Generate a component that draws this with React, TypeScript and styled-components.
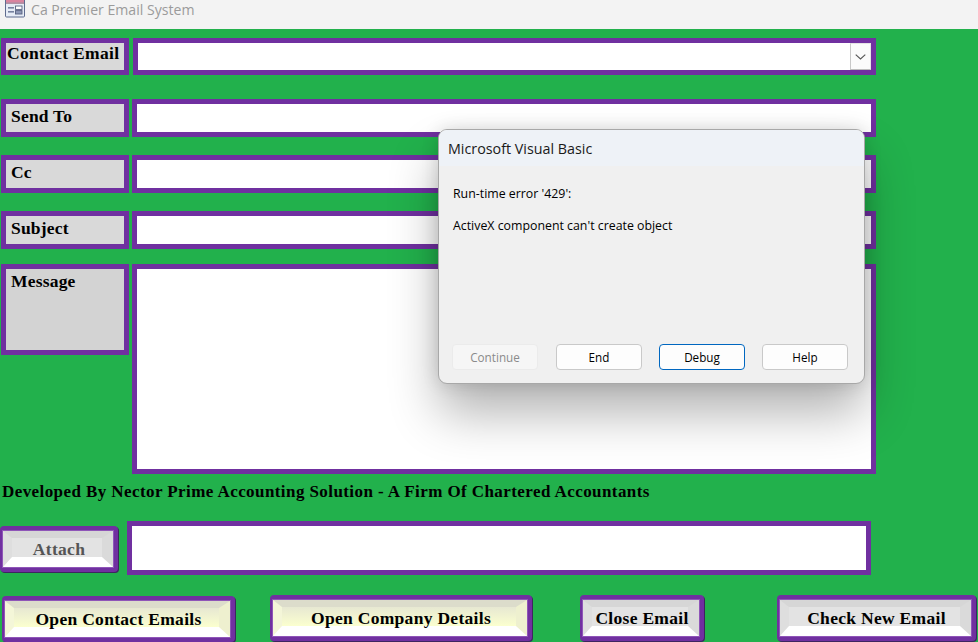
import React from "react";
import styled, { createGlobalStyle } from "styled-components";

const PURPLE = "#7030a0";
const GREEN = "#22b14c";
const SERIF = `"Liberation Serif", "Times New Roman", serif`;
const UI = `"Open Sans", "Noto Sans", sans-serif`;

const Global = createGlobalStyle`
  html, body { margin: 0; padding: 0; height: 642px; overflow: hidden; background: ${GREEN}; }
`;

const Page = styled.div`
  position: relative;
  width: 978px;
  height: 642px;
  overflow: hidden;
  background: ${GREEN};
`;

const TitleBar = styled.header`
  height: 29px;
  background: #f3f3f3;
  display: flex;
  align-items: flex-start;
  gap: 6px;
  padding-left: 5px;
  overflow: hidden;
`;

const TitleText = styled.span`
  font: 14.1px/20px ${UI};
  color: #9b9b9b;
`;

const Form = styled.main`
  display: flex;
  flex-direction: column;
`;

const Row = styled.div<{ $top: number; $gap?: number }>`
  display: flex;
  align-items: flex-start;
  margin-top: ${(p) => p.$top}px;
  padding-left: 1px;
  gap: ${(p) => p.$gap ?? 3}px;
`;

const Label = styled.div<{ $h: number; $px?: number; $bg?: string; $tight?: boolean }>`
  box-sizing: border-box;
  width: 128px;
  height: ${(p) => p.$h}px;
  border: 5px solid ${PURPLE};
  background: ${(p) => p.$bg ?? "#d9d9d9"};
  color: #000;
  font: bold 17.5px/20px ${SERIF};
  letter-spacing: ${(p) => (p.$tight ? 0.3 : 0.2)}px;
  padding: ${(p) => (p.$tight ? 0 : 2)}px 0 0 ${(p) => p.$px ?? 5}px;
  white-space: nowrap;
`;

const Field = styled.div<{ $h: number; $w?: number }>`
  box-sizing: border-box;
  width: ${(p) => p.$w ?? 744}px;
  height: ${(p) => p.$h}px;
  border: 5px solid ${PURPLE};
  background: #fff;
  display: flex;
  justify-content: flex-end;
`;

const ComboArrow = styled.div`
  box-sizing: border-box;
  width: 21px;
  height: 100%;
  border-left: 1px solid #c8c8c8;
  border-bottom: 1px solid #bdbdbd;
  border-top: 1px solid #e4e4e4;
  border-right: 1px solid #e4e4e4;
  background: #fbfbfb;
  display: flex;
  align-items: center;
  justify-content: center;
`;

const Credit = styled.p`
  margin: 8px 0 0 2px;
  font: bold 17px/20px ${SERIF};
  letter-spacing: 0.42px;
  color: #000;
  white-space: nowrap;
`;

const BevelButton = styled.button<{ $w: number; $ml?: number; $mt?: number }>`
  box-sizing: border-box;
  flex: none;
  width: ${(p) => p.$w}px;
  height: 46px;
  margin: ${(p) => p.$mt ?? 0}px 0 0 ${(p) => p.$ml ?? 0}px;
  padding: 0;
  border: 5px solid ${PURPLE};
  border-left-width: 3px;
  border-radius: 4px;
  background: ${PURPLE};
  box-shadow: 1px 1px 0 #3e2560;
  display: block;
`;

const BevelFace = styled.span<{ $yellow?: boolean; $muted?: boolean }>`
  box-sizing: border-box;
  display: flex;
  align-items: center;
  justify-content: center;
  width: 100%;
  height: 100%;
  padding: 2px 0 0 4px;
  border-style: solid;
  border-width: 7px 11px 10px 9px;
  border-color: ${(p) => (p.$yellow ? "#dcdccb" : "#d6d6d6")} ${(p) => (p.$yellow ? "#eef0cf" : "#dadada")} #ffffff ${(p) => (p.$yellow ? "#f4f6d8" : "#dedede")};
  box-shadow: 0 0 0 1px #8f55b8;
  background: ${(p) => (p.$yellow ? "linear-gradient(#e7e8d2, #fbffcf)" : "#e3e3e3")};
  color: ${(p) => (p.$muted ? "#555" : "#000")};
  font: bold 17.5px/20px ${SERIF};
  letter-spacing: 0.3px;
  white-space: nowrap;
`;

const AttachSlot = styled.div`
  padding-top: 5px;
  margin-left: -1px;
`;

const Dialog = styled.section`
  position: absolute;
  left: 438px;
  top: 129px;
  box-sizing: border-box;
  width: 427px;
  height: 255px;
  display: flex;
  flex-direction: column;
  border: 1px solid #a8a8a8;
  border-radius: 9px;
  background: #f0f0f0;
  overflow: hidden;
`;

const DialogShadow = styled.div`
  position: absolute;
  left: 439px;
  top: 130px;
  width: 425px;
  height: 253px;
  border-radius: 9px;
  box-shadow: 0 30px 50px rgba(0, 0, 0, 0.3), 0 0 18px rgba(0, 0, 0, 0.16);
`;

const DialogTitle = styled.div`
  height: 36px;
  flex: none;
  background: #eef2f7;
  color: #1a1a1a;
  font: 14.3px/37px ${UI};
  padding-left: 9px;
`;

const DialogText = styled.p<{ $top: number }>`
  margin: ${(p) => p.$top}px 0 0 14px;
  font: 12.35px/16px ${UI};
  color: #000;
`;

const DialogFooter = styled.div`
  margin-top: auto;
  padding: 0 16px 13px 13px;
  display: flex;
  gap: 17px;
`;

const DialogButton = styled.button<{ $state?: "disabled" | "focus" }>`
  box-sizing: border-box;
  width: 86px;
  height: 26px;
  padding: 0;
  border-radius: 4px;
  font: 11.7px/16px ${UI};
  background: ${(p) => (p.$state === "disabled" ? "#f6f6f6" : "#fdfdfd")};
  color: ${(p) => (p.$state === "disabled" ? "#8a8a8a" : "#000")};
  border: 1px solid
    ${(p) => (p.$state === "disabled" ? "#ebebeb" : p.$state === "focus" ? "#0067c0" : "#c9c9c9")};
  &:first-child {
    margin-right: 1px;
  }
`;

const Chevron = () => (
  <svg width="11" height="6" viewBox="0 0 11 6" fill="none">
    <path d="M.7.7 5.5 5 10.3.7" stroke="#555" strokeWidth="1.1" />
  </svg>
);

const FormIcon = () => (
  <svg width="20" height="18" viewBox="0 0 20 18" style={{ flex: "none" }}>
    <rect x=".5" y="-2" width="19" height="19" rx="1" fill="#e6ecf6" stroke="#5f6c8f" />
    <rect x="1" y="0" width="18" height="2.6" fill="#d9849f" />
    <rect x="1" y="2.6" width="18" height="1" fill="#8d5570" />
    <rect x="3" y="7" width="6" height="1.6" fill="#76829f" />
    <rect x="3" y="11" width="6" height="1.6" fill="#76829f" />
    <rect x="10.5" y="6" width="6.5" height="3.4" fill="#fff" stroke="#56617f" strokeWidth=".9" />
    <rect x="10.5" y="10.6" width="6.5" height="3.4" fill="#8f9ab8" stroke="#56617f" strokeWidth=".9" />
  </svg>
);

export default function App() {
  return (
    <Page>
      <Global />
      <TitleBar>
        <FormIcon />
        <TitleText>Ca Premier Email System</TitleText>
      </TitleBar>
      <Form>
        <Row $top={9} $gap={4}>
          <Label $h={37} $px={1} $tight>Contact Email</Label>
          <Field $h={37} $w={743}>
            <ComboArrow>
              <Chevron />
            </ComboArrow>
          </Field>
        </Row>
        <Row $top={24}>
          <Label $h={38}>Send To</Label>
          <Field $h={38} />
        </Row>
        <Row $top={18}>
          <Label $h={38}>Cc</Label>
          <Field $h={38} />
        </Row>
        <Row $top={18}>
          <Label $h={38}>Subject</Label>
          <Field $h={38} />
        </Row>
        <Row $top={15}>
          <Label $h={91} $bg="#d3d3d3">Message</Label>
          <Field $h={210} />
        </Row>
        <Credit>Developed By Nector Prime Accounting Solution - A Firm Of Chartered Accountants</Credit>
        <Row $top={19} $gap={9}>
          <AttachSlot>
            <BevelButton $w={118}>
              <BevelFace $muted>Attach</BevelFace>
            </BevelButton>
          </AttachSlot>
          <Field $h={54} />
        </Row>
        <Row $top={20} $gap={0}>
          <BevelButton $w={233} $ml={1} $mt={1}>
            <BevelFace $yellow>Open Contact Emails</BevelFace>
          </BevelButton>
          <BevelButton $w={262} $ml={35}>
            <BevelFace $yellow>Open Company Details</BevelFace>
          </BevelButton>
          <BevelButton $w={124} $ml={48}>
            <BevelFace>Close Email</BevelFace>
          </BevelButton>
          <BevelButton $w={199} $ml={73}>
            <BevelFace>Check New Email</BevelFace>
          </BevelButton>
        </Row>
      </Form>
      <DialogShadow />
      <Dialog>
        <DialogTitle>Microsoft Visual Basic</DialogTitle>
        <DialogText $top={20}>Run-time error '429':</DialogText>
        <DialogText $top={16}>ActiveX component can't create object</DialogText>
        <DialogFooter>
          <DialogButton $state="disabled">Continue</DialogButton>
          <DialogButton>End</DialogButton>
          <DialogButton $state="focus">Debug</DialogButton>
          <DialogButton>Help</DialogButton>
        </DialogFooter>
      </Dialog>
    </Page>
  );
}
